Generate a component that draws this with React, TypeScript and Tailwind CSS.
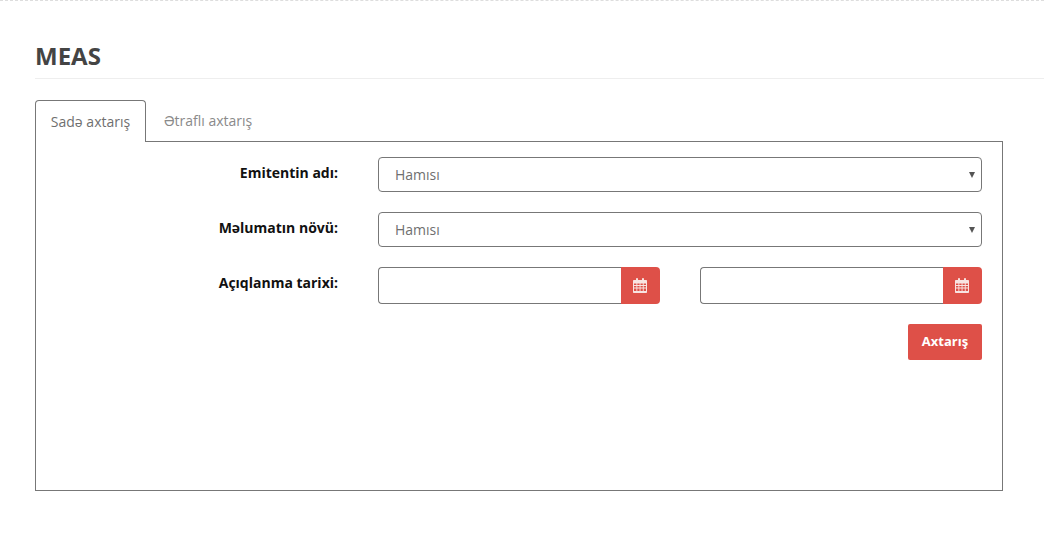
import React from 'react';

const labelClasses = "w-[302px] text-right text-[14px] font-bold leading-[20px] text-[#111] shrink-0";
const selectClasses = "flex-1 h-[35px] border border-[#777] rounded-[4px] flex items-center justify-between pl-[16px] pr-[6px] text-[14px] text-[#6f6f6f] bg-white";

const CalendarIcon = () => (
  <svg width="14" height="15" viewBox="0 0 14 15" fill="none">
    <path fillRule="evenodd" clipRule="evenodd" fill="#f8e4e2" d="M1 2h2V1.200C3 .5 3.400 0 4 0s1 .5 1 1.200V2h4V1.200C9 .5 9.400 0 10 0s1 .5 1 1.200V2h2c.6 0 1 .4 1 1v11c0 .6-.4 1-1 1H1c-.6 0-1-.4-1-1V3c0-.6.4-1 1-1zM1 5.500v1.600h2.400V5.500zM4.300 5.500v1.600h2.300V5.500zM7.500 5.500v1.600h2.300V5.500zM10.700 5.500v1.600H13V5.500zM1 8v1.600h2.400V8zM4.300 8v1.600h2.300V8zM7.500 8v1.600h2.300V8zM10.700 8v1.600H13V8zM1 10.500v2.500h2.400v-2.500zM4.300 10.500v2.500h2.300v-2.500zM7.500 10.500v2.500h2.300v-2.500zM10.700 10.500v2.500H13v-2.500z" />
  </svg>
);

const SelectBox = () => (
  <div className={selectClasses}>
    <span>Hamısı</span>
    <span className="w-0 h-0 border-l-[3px] border-r-[3px] border-t-[6px] border-l-transparent border-r-transparent border-t-[#555]" />
  </div>
);

const DateInput = () => (
  <div className="flex w-[282px] h-[37px]">
    <div className="flex-1 border border-[#777] border-r-0 rounded-l-[4px] bg-white" />
    <button className="w-[39px] pr-[2px] bg-[#de5048] rounded-r-[4px] flex items-center justify-center">
      <CalendarIcon />
    </button>
  </div>
);

const App: React.FC = () => {
  return (
    <div className="w-[1044px] h-[542px] bg-white overflow-hidden" style={{ fontFamily: '"Open Sans", sans-serif' }}>
      <div className="border-t border-dashed border-[#ddd]" />

      {/* Heading */}
      <div className="ml-[35px] mt-[38px] h-[40px] border-b border-[#eee]">
        <h1 className="text-[24px] font-bold leading-[33px] text-[#444]">MEAS</h1>
      </div>

      {/* Tabs */}
      <div className="ml-[35px] mt-[21px] w-[968px]">
        <div className="flex h-[42px] relative z-10">
          <div className="w-[111px] h-[42px] border border-[#777] border-b-0 rounded-t-[4px] bg-white flex items-center justify-center text-[14px] text-[#6f6f6f]">
            Sadə axtarış
          </div>
          <div className="w-[106px] h-[41px] ml-[18px] flex items-center text-[14px] text-[#8a8a8a]">
            Ətraflı axtarış
          </div>
        </div>

        <div className="border border-[#777] h-[350px] -mt-px pt-[15px] pr-[20px]">
          <div className="flex flex-col">
            <div className="flex items-start gap-[40px]">
              <label className={`${labelClasses} pt-[6px]`}>Emitentin adı:</label>
              <SelectBox />
            </div>
            <div className="flex items-start gap-[40px] mt-[20px]">
              <label className={`${labelClasses} pt-[6px]`}>Məlumatın növü:</label>
              <SelectBox />
            </div>
            <div className="flex items-start gap-[40px] mt-[20px]">
              <label className={`${labelClasses} pt-[6px]`}>Açıqlanma tarixi:</label>
              <div className="flex-1 flex justify-between">
                <DateInput />
                <DateInput />
              </div>
            </div>
            <div className="flex justify-end mt-[20px]">
              <button className="w-[74px] h-[36px] bg-[#de5048] rounded-[2px] text-white text-[13px] font-bold">Axtarış</button>
            </div>
          </div>
        </div>
      </div>
    </div>
  );
};

export default App;
